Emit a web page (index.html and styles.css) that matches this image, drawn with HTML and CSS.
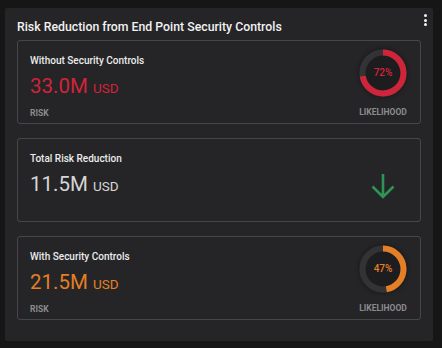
FILE: index.html
```html
<!DOCTYPE html>
<html lang="en">
<head>
    <meta charset="UTF-8">
    <meta name="viewport" content="width=device-width, initial-scale=1.0">
    <title>Risk Reduction</title>
    <link rel="stylesheet" href="styles.css">
</head>
<body>
    <div class="card">
        <div class="card-header">
            <h1>Risk Reduction from End Point Security Controls</h1>
            <span class="menu"><i></i><i></i><i></i></span>
        </div>

        <!-- Without controls -->
        <div class="box">
            <div class="info">
                <div class="label">Without Security Controls</div>
                <div class="value red">33.0M <span class="unit">USD</span></div>
                <div class="caption">RISK</div>
            </div>
            <div class="gauge">
                <div class="donut">
                    <svg width="48" height="48" viewBox="0 0 48 48">
                        <circle cx="24" cy="24" r="20.5" fill="#1d1d1f" stroke="#333336" stroke-width="6"/>
                        <circle cx="24" cy="24" r="20.5" fill="none" stroke="#d0243a" stroke-width="6"
                            stroke-dasharray="92.74 128.8" transform="rotate(-90 24 24)"/>
                    </svg>
                    <span class="pct red">72%</span>
                </div>
                <div class="caption">LIKELIHOOD</div>
            </div>
        </div>

        <!-- Reduction -->
        <div class="box">
            <div class="info">
                <div class="label">Total Risk Reduction</div>
                <div class="value grey">11.5M <span class="unit">USD</span></div>
            </div>
            <div class="arrow">
                <svg width="28" height="28" viewBox="0 0 28 28">
                    <path d="M14 2v23M3.5 14.5L14 25l10.5-10.5" fill="none" stroke="#2e9455" stroke-width="2.6"/>
                </svg>
            </div>
        </div>

        <!-- With controls -->
        <div class="box">
            <div class="info">
                <div class="label">With Security Controls</div>
                <div class="value orange">21.5M <span class="unit">USD</span></div>
                <div class="caption">RISK</div>
            </div>
            <div class="gauge">
                <div class="donut">
                    <svg width="48" height="48" viewBox="0 0 48 48">
                        <circle cx="24" cy="24" r="20.5" fill="#1d1d1f" stroke="#333336" stroke-width="6"/>
                        <circle cx="24" cy="24" r="20.5" fill="none" stroke="#e47f26" stroke-width="6"
                            stroke-dasharray="60.54 128.8" transform="rotate(-90 24 24)"/>
                    </svg>
                    <span class="pct orange">47%</span>
                </div>
                <div class="caption">LIKELIHOOD</div>
            </div>
        </div>
    </div>
</body>
</html>
```

FILE: styles.css
```css
body {
    font-family: Roboto, "Noto Sans", Arial, sans-serif;
    margin: 0;
    padding: 8px 9px 7px 5px;
    background-color: #161617;
    color: #e8e8e8;
}
.card {
    background-color: #252527;
    border-radius: 2px;
    padding: 0 12px 21px 12px;
}
.card-header {
    display: flex;
    justify-content: space-between;
    align-items: flex-start;
    height: 32px;
}
h1 {
    margin: 8px 0 0 0;
    font-size: 12.3px;
    font-weight: 500;
    color: #f2f2f2;
    line-height: 22px;
}
.menu {
    display: flex;
    flex-direction: column;
    gap: 1.5px;
    margin: 6px -6px 0 0;
}
.menu i {
    display: block;
    width: 3px;
    height: 3px;
    border-radius: 50%;
    background-color: #f4f4f4;
}
.box {
    display: flex;
    justify-content: space-between;
    height: 84px;
    box-sizing: border-box;
    border: 1px solid #47474a;
    border-radius: 3px;
    padding: 12px 13px 0 12px;
}
.box + .box {
    margin-top: 14px;
}
.info {
    display: flex;
    flex-direction: column;
}
.label {
    font-size: 10px;
    font-weight: 500;
    line-height: 16px;
    color: #ececec;
}
.value {
    font-size: 20.5px;
    line-height: 26px;
    margin-top: 4px;
}
.unit {
    font-size: 13.5px;
}
.caption {
    font-size: 8.5px;
    font-weight: 700;
    line-height: 12px;
    margin-top: 6px;
    color: #8b8b8d;
}
.red { color: #d0243a; }
.orange { color: #e47f26; }
.grey { color: #d6d6d6; }
.gauge {
    display: flex;
    flex-direction: column;
    align-items: center;
}
.donut {
    position: relative;
    width: 48px;
    height: 48px;
    margin-top: -4px;
    border-radius: 50%;
    box-shadow: 0 0 4px rgba(0, 0, 0, 0.4);
}
.donut svg {
    display: block;
}
.pct {
    position: absolute;
    top: 0;
    left: 0;
    width: 100%;
    line-height: 48px;
    text-align: center;
    font-size: 10px;
    font-weight: 500;
}
.gauge .caption {
    margin-top: 9px;
}
.arrow {
    display: flex;
    align-items: center;
    padding-right: 10px;
    margin-top: -1px;
}
.arrow svg {
    display: block;
}
```
